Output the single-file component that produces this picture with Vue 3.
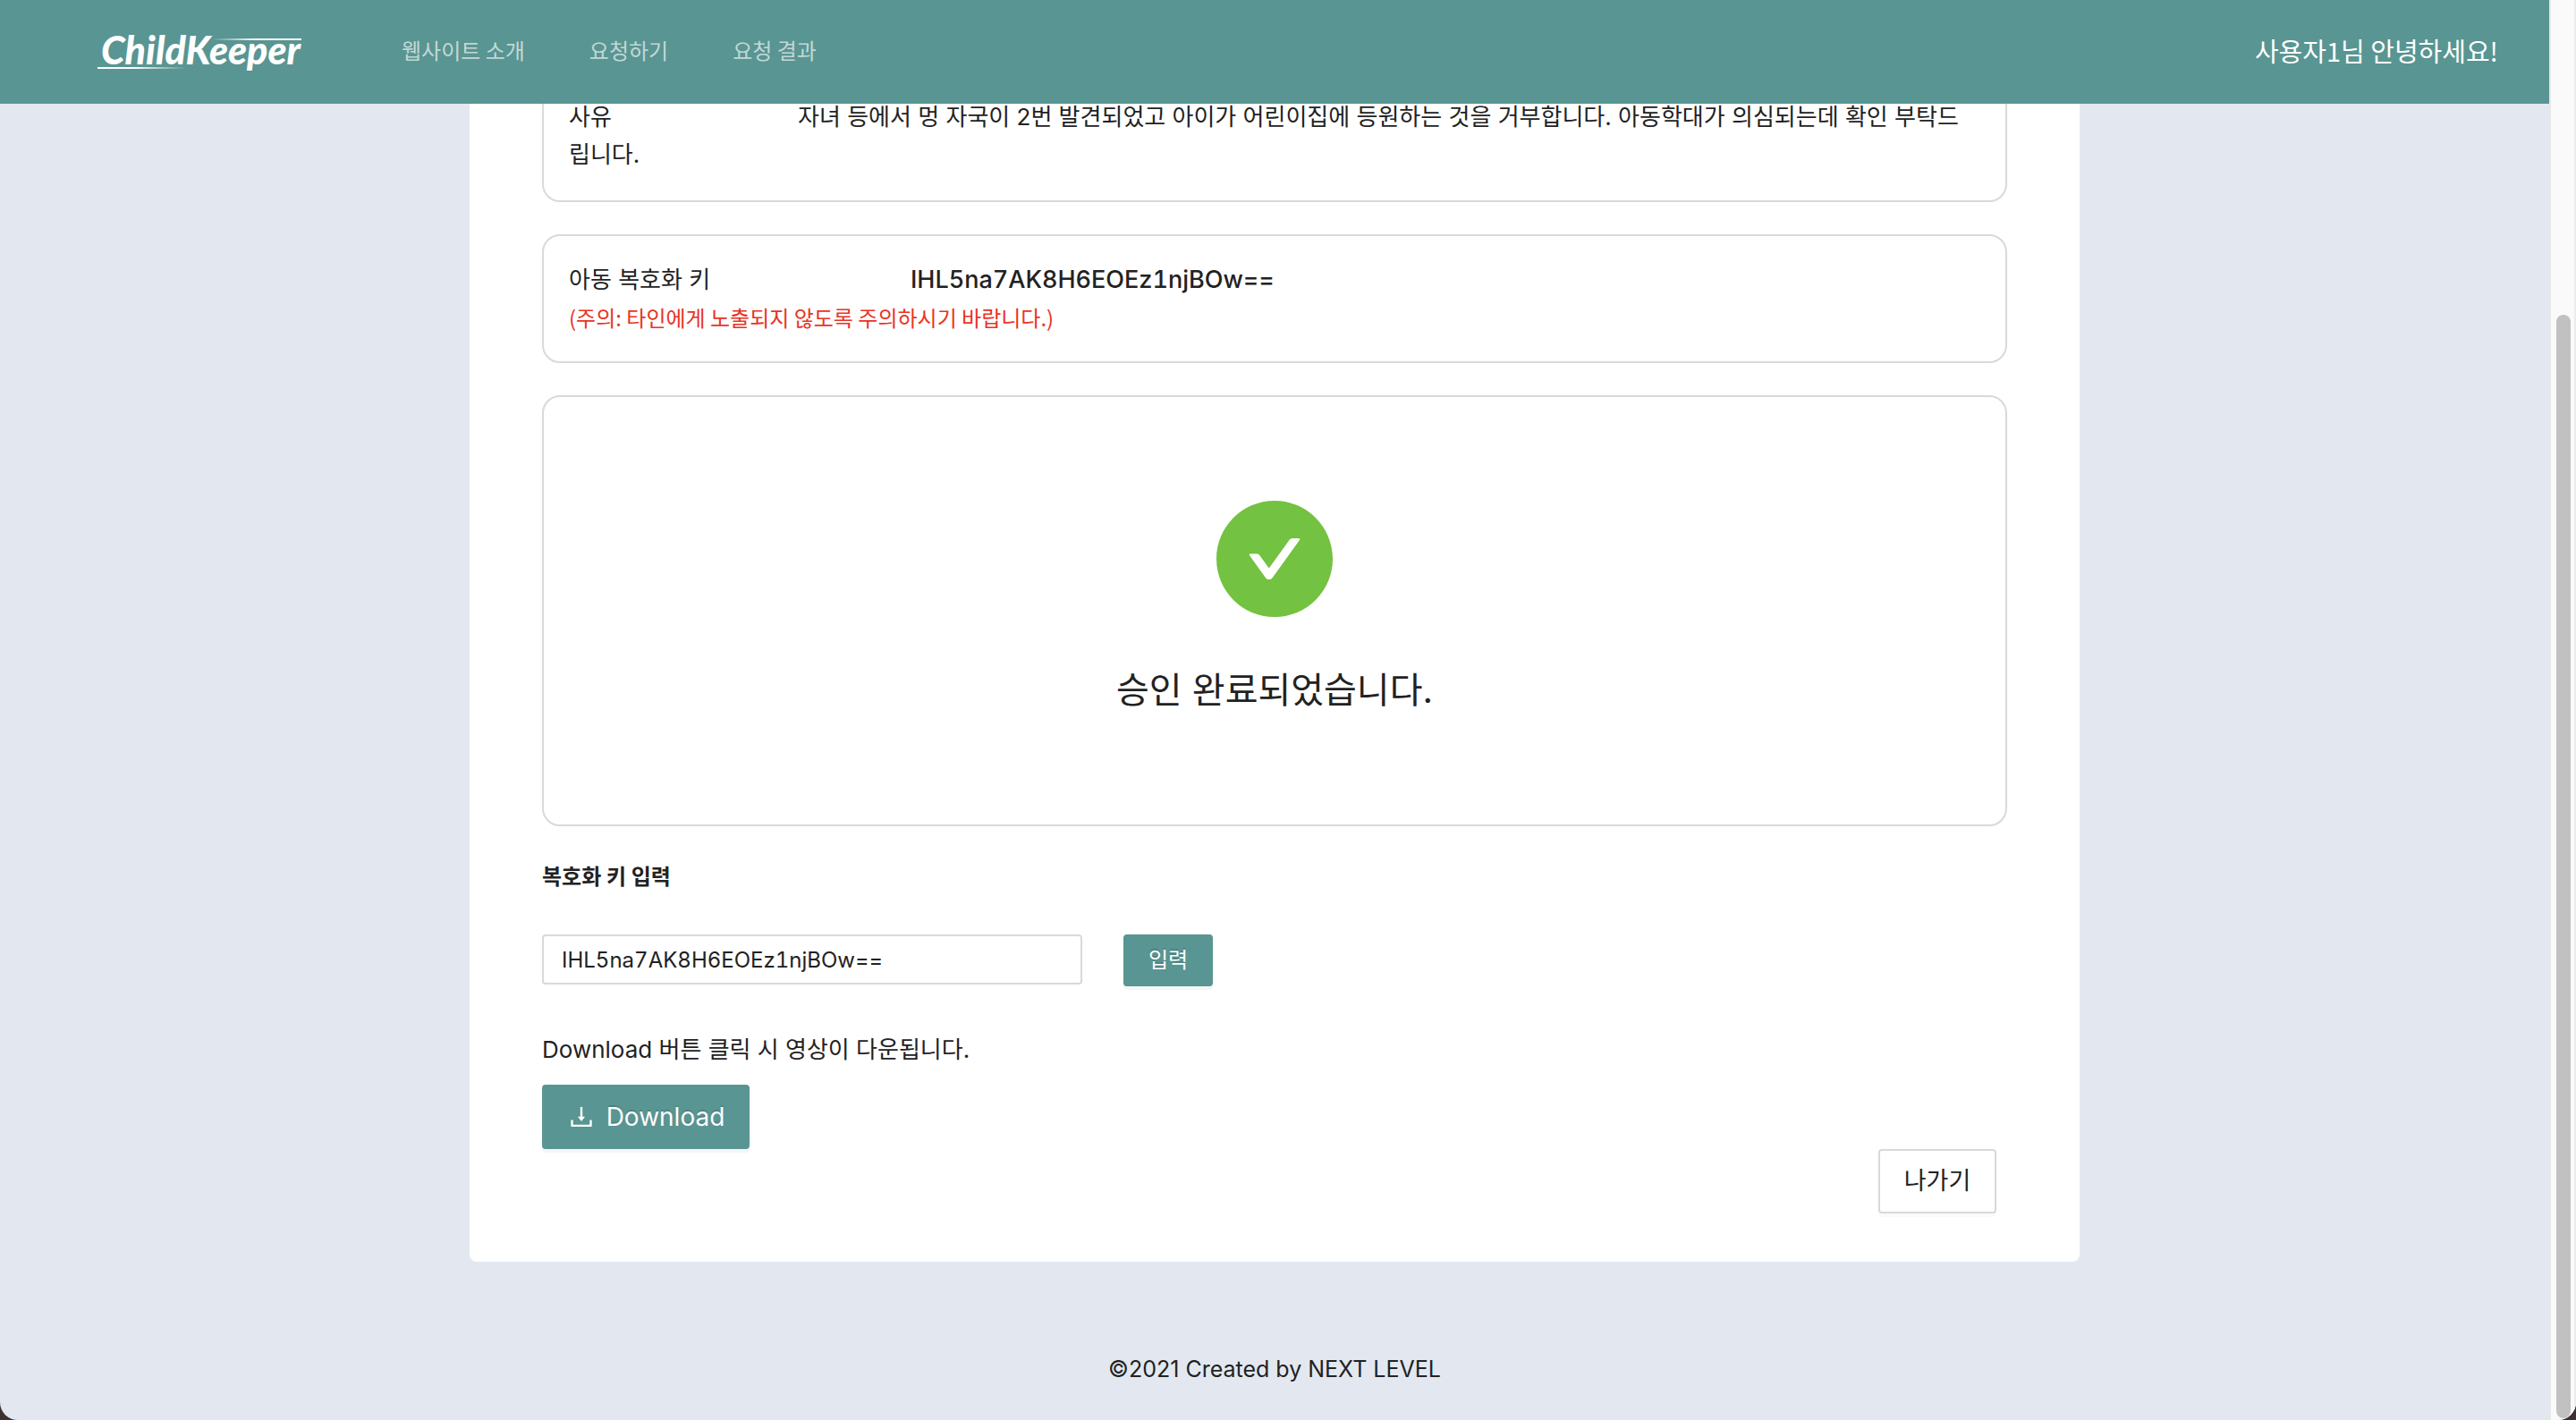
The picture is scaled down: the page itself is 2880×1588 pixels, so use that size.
<script setup>
import { ref } from 'vue'

const menu = ['웹사이트 소개', '요청하기', '요청 결과']
const issuedKey = 'IHL5na7AK8H6EOEz1njBOw=='
const enteredKey = ref(issuedKey)
</script>

<template>
  <div class="window">
    <div class="page">
      <header class="topbar">
        <a href="#" class="logo">ChildKeeper</a>
        <nav class="menu">
          <a v-for="item in menu" :key="item" href="#">{{ item }}</a>
        </nav>
        <span class="greeting">사용자1님 안녕하세요!</span>
      </header>

      <main class="card">
        <section class="box box-reason">
          <p><span class="label label-reason">사유</span>자녀 등에서 멍 자국이 2번 발견되었고 아이가 어린이집에 등원하는 것을 거부합니다. 아동학대가 의심되는데 확인 부탁드립니다.</p>
        </section>

        <section class="box">
          <p><span class="label label-key">아동 복호화 키</span><strong class="key">{{ issuedKey }}</strong></p>
          <p class="warning">(주의: 타인에게 노출되지 않도록 주의하시기 바랍니다.)</p>
        </section>

        <section class="box result">
          <svg class="result-icon" viewBox="64 64 896 896" aria-hidden="true">
            <path d="M512 64C264.6 64 64 264.6 64 512s200.6 448 448 448 448-200.6 448-448S759.4 64 512 64zm193.5 301.7l-210.6 292a31.8 31.8 0 01-51.7 0L318.5 484.9c-3.8-5.3 0-12.7 6.5-12.7h46.9c10.2 0 19.9 4.9 25.9 13.3l71.2 98.8 157.2-218c6-8.3 15.6-13.3 25.9-13.3H699c6.5 0 10.3 7.4 6.5 12.7z" />
          </svg>
          <h1>승인 완료되었습니다.</h1>
        </section>

        <form class="key-form" @submit.prevent>
          <label for="decrypt-key">복호화 키 입력</label>
          <div class="key-row">
            <input id="decrypt-key" v-model="enteredKey" type="text" />
            <button type="submit" class="btn primary small">입력</button>
          </div>
        </form>

        <p class="hint">Download 버튼 클릭 시 영상이 다운됩니다.</p>
        <button type="button" class="btn primary download">
          <svg viewBox="0 0 1024 1024" aria-hidden="true">
            <path d="M505.7 661a8 8 0 0012.6 0l112-141.7c4.1-5.2.4-12.9-6.3-12.9h-74.1V168c0-4.4-3.6-8-8-8h-60c-4.4 0-8 3.6-8 8v338.3H400c-6.7 0-10.4 7.7-6.3 12.9l112 141.8zM878 626h-60c-4.4 0-8 3.6-8 8v154H214V634c0-4.4-3.6-8-8-8h-60c-4.4 0-8 3.6-8 8v198c0 17.7 14.3 32 32 32h684c17.7 0 32-14.3 32-32V634c0-4.4-3.6-8-8-8z" />
          </svg>
          <span>Download</span>
        </button>
        <div class="actions">
          <button type="button" class="btn plain">나가기</button>
        </div>
      </main>

      <footer class="footer">©2021 Created by NEXT LEVEL</footer>
    </div>

    <div class="scrollbar" aria-hidden="true">
      <div class="scroll-space"></div>
      <div class="scroll-thumb"></div>
    </div>
  </div>
</template>

<style>
body {
  background: #3c3231;
}
</style>

<style scoped>
* {
  box-sizing: border-box;
}

.window {
  display: flex;
  min-height: 100vh;
  overflow: hidden;
  border-radius: 0 0 20px 20px;
  background: #e3e8f0;
  color: #222;
  font-family: Inter, "Noto Sans CJK KR", sans-serif;
  font-size: 26px;
  line-height: 42px;
}

.page {
  flex: 1;
  display: flex;
  flex-direction: column;
  min-width: 0;
}

p,
h1 {
  margin: 0;
}

.topbar {
  position: relative;
  z-index: 1;
  display: flex;
  align-items: center;
  height: 116px;
  padding: 0 57px 4px 109px;
  background: #599592;
  color: #fff;
  font-family: "Noto Sans CJK KR", sans-serif;
}

.logo {
  position: relative;
  width: 232px;
  padding-left: 4px;
  color: #fff;
  font-family: Lato, sans-serif;
  font-size: 43px;
  font-style: italic;
  font-weight: 900;
  text-decoration: none;
}

.logo::before,
.logo::after {
  content: "";
  position: absolute;
  height: 2px;
}

.logo::before {
  top: 8px;
  right: 4px;
  width: 100px;
  background: linear-gradient(to left, #fff 50%, transparent);
}

.logo::after {
  bottom: 0;
  left: 0;
  width: 100px;
  background: linear-gradient(to right, #fff 40%, transparent);
}

.menu {
  display: flex;
  gap: 72px;
  margin-left: 108px;
  font-size: 24px;
}

.menu a {
  color: rgba(255, 255, 255, 0.65);
  text-decoration: none;
}

.greeting {
  margin-left: auto;
  font-size: 29px;
}

.card {
  width: 1800px;
  max-width: 100%;
  margin: -6px auto 0;
  padding: 0 81px 54px;
  border-radius: 0 0 8px 8px;
  background: #fff;
}

.box {
  margin-bottom: 36px;
  padding: 28px 40px 28px 28px;
  border: 2px solid #d9d9d9;
  border-radius: 20px;
}

.box-reason {
  padding-top: 0;
  padding-bottom: 30px;
  border-top: 0;
  border-radius: 0 0 20px 20px;
}

.label {
  display: inline-block;
}

.label-reason {
  width: 256px;
}

.label-key {
  width: 382px;
}

.key {
  font-size: 27px;
  font-variant-numeric: tabular-nums;
  font-weight: 500;
}

.warning {
  color: #ea3323;
  font-family: "Noto Sans CJK KR", sans-serif;
  font-size: 24px;
}

.result {
  display: flex;
  flex-direction: column;
  align-items: center;
  gap: 50px;
  padding: 116px 28px 118px;
}

.result-icon {
  width: 130px;
  height: 130px;
  fill: #73c241;
}

.result h1 {
  font-size: 40px;
  font-weight: 400;
  line-height: 64px;
}

.key-form label {
  display: block;
  font-size: 24px;
  font-weight: 700;
}

.key-row {
  display: flex;
  align-items: flex-start;
  gap: 46px;
  margin-top: 43px;
}

.key-row input {
  width: 604px;
  height: 56px;
  padding: 0 20px;
  border: 2px solid #d9d9d9;
  border-radius: 4px;
  background: #fff;
  color: #222;
  font: inherit;
  font-size: 24px;
  font-variant-numeric: tabular-nums;
}

.btn {
  display: inline-flex;
  align-items: center;
  justify-content: center;
  height: 72px;
  padding: 0;
  border: 2px solid #d9d9d9;
  border-radius: 4px;
  background: #fff;
  box-shadow: 0 4px 0 rgba(0, 0, 0, 0.02);
  color: #222;
  font: inherit;
  white-space: nowrap;
}

.btn.plain {
  width: 132px;
  font-size: 27px;
}

.btn.primary {
  border-color: #599592;
  background: #599592;
  box-shadow: 0 4px 0 rgba(0, 0, 0, 0.04);
  color: #fff;
  text-shadow: 0 -2px 0 rgba(0, 0, 0, 0.12);
}

.btn.small {
  width: 100px;
  height: 58px;
  font-size: 24px;
}

.hint {
  margin-top: 50px;
}

.btn.download {
  display: flex;
  gap: 12px;
  width: 232px;
  margin-top: 18px;
  font-size: 28px;
}

.download svg {
  width: 32px;
  height: 32px;
  fill: currentColor;
}

.actions {
  display: flex;
  justify-content: flex-end;
  padding-right: 12px;
}

.footer {
  margin-top: 99px;
  text-align: center;
  font-size: 25px;
}

.scrollbar {
  display: flex;
  flex-direction: column;
  width: 30px;
  padding: 0 4px 2px 6px;
  border-left: 2px solid #e8e8e8;
  border-right: 2px solid #ececec;
  background: #fafafa;
}

.scroll-space {
  flex: 352;
}

.scroll-thumb {
  flex: 1234;
  border-radius: 8px;
  background: #c1c1c1;
}
</style>
